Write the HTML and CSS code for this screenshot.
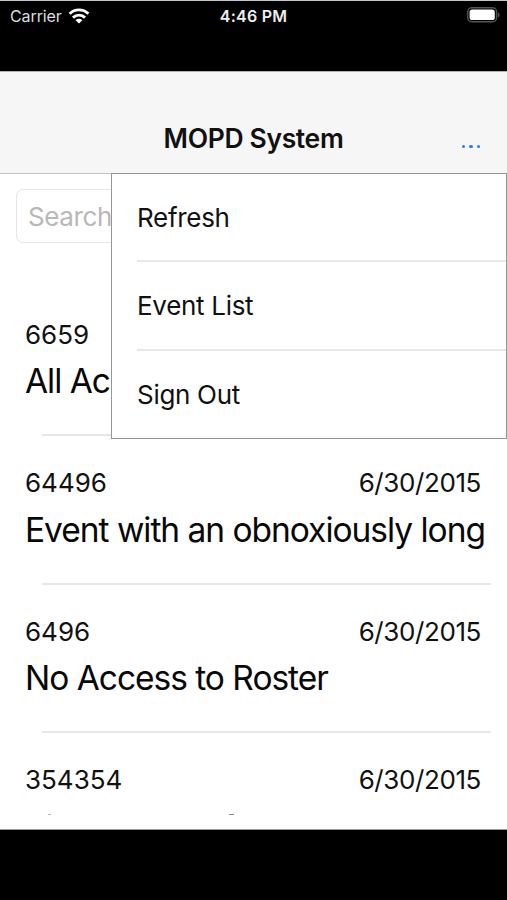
FILE: index.html
```html
<!DOCTYPE html>
<html lang="en">
<head>
<meta charset="utf-8">
<title>MOPD System</title>
<link rel="stylesheet" href="styles.css">
</head>
<body>
<div class="phone">
  <header class="status">
    <div class="carrier"><span class="carrier-name">Carrier</span>
      <svg class="wifi" viewBox="0 0 22 16"><g fill="none" stroke="#fff" stroke-width="2.9"><path d="M1.6 5.8a13.3 13.3 0 0 1 18.8 0"/><path d="M5 9.6a8.5 8.5 0 0 1 12 0"/></g><path d="M11 15.6 7.6 12.2a4.8 4.8 0 0 1 6.8 0z" fill="#fff"/></svg>
    </div>
    <span class="clock">4:46 PM</span>
    <svg class="battery" viewBox="0 0 33 16"><rect x=".8" y=".8" width="28.8" height="14" rx="4" fill="none" stroke="#555" stroke-width="1.4"/><rect x="2.6" y="2.5" width="25.2" height="10.6" rx="2.6" fill="#fff"/><path d="M31 5.5c2 .6 2 4.4 0 5z" fill="#555"/></svg>
  </header>
  <nav class="navbar">
    <h1 class="title">MOPD System</h1>
    <span class="more"><i></i><i></i><i></i></span>
    <ul class="menu">
      <li>Refresh</li>
      <li>Event List</li>
      <li>Sign Out</li>
    </ul>
  </nav>
  <main class="content">
    <div class="search">Search</div>
    <section class="list">
      <article class="event"><div class="meta"><span>6659</span></div><h2 class="covered">All Acc</h2></article>
      <article class="event"><div class="meta"><span>64496</span><span class="date">6/30/2015</span></div><h2>Event with an obnoxiously long</h2></article>
      <article class="event"><div class="meta"><span>6496</span><span class="date">6/30/2015</span></div><h2>No Access to Roster</h2></article>
      <article class="event"><div class="meta"><span>354354</span><span class="date">6/30/2015</span></div><div class="cut"><i class="dot"></i><i class="hook"></i></div></article>
    </section>
  </main>
  <footer class="bottom"></footer>
</div>
</body>
</html>
```
FILE: styles.css
```css
* { box-sizing: border-box; }
body { margin: 0; background: #000; font-family: Inter, "Liberation Sans", sans-serif; color: #111; }
h1, h2, ul { margin: 0; padding: 0; font-weight: 400; list-style: none; }
.phone { width: 507px; height: 900px; display: flex; flex-direction: column; overflow: hidden; white-space: nowrap; }
.status { height: 71px; flex: none; border-top: 1.5px solid #c9c9c9; background: #000; color: #eee; display: grid; grid-template-columns: 1fr auto 1fr; align-items: start; padding: 5px 7px 0 10px; font-size: 16px; line-height: 20px; }
.carrier { display: flex; gap: 6px; }
.carrier-name { color: #ddd; letter-spacing: -.1px; }
.wifi { width: 22px; height: 16px; margin-top: 2px; }
.clock { font-weight: 600; font-size: 16px; letter-spacing: .25px; margin-left: -3px; }
.battery { width: 33px; height: 16px; justify-self: end; margin-top: 1px; }
.navbar { position: relative; height: 103px; flex: none; background: #f6f6f6; border-top: 1px solid #b0b0b0; border-bottom: 1px solid #c4c4c4; display: grid; grid-template-columns: 1fr auto 1fr; padding: 50px 27px 0; line-height: 32px; }
.title { grid-column: 2; font-size: 26.5px; font-weight: 600; letter-spacing: -.35px; }
.more { justify-self: end; display: flex; gap: 4px; padding-top: 22.5px; }
.more i { width: 3.4px; height: 3.4px; border-radius: 50%; background: #2580e8; }
.menu { position: absolute; z-index: 2; top: 101px; left: 111px; width: 396px; height: 266px; background: #fff; border: 1px solid #969696; padding-left: 25px; font-size: 26px; letter-spacing: -.3px; }
.menu li { height: 88.4px; line-height: 88px; border-bottom: 2px solid #e8e8e8; }
.menu li:last-child { border: 0; }
.content { height: 656px; flex: none; background: #fff; overflow: hidden; border-bottom: 1px solid #999; }
.search { width: 474px; height: 54px; margin: 15px 0 0 16px; border: 1.5px solid #e4e4e4; border-radius: 7px; padding-left: 11px; color: #b8b8b8; font-size: 26px; line-height: 53px; letter-spacing: -.4px; }
.list { padding-top: 44.5px; }
.event { height: 148.5px; padding: 30.4px 22px 0 25px; background: linear-gradient(#e6e6e6, #e6e6e6) 42px 100% / 449px 2px no-repeat; }
.meta { display: flex; justify-content: space-between; font-size: 26px; line-height: 34px; padding-right: 4px; }
.date { letter-spacing: -.4px; }
.event h2 { margin-top: 8.6px; font-size: 33.5px; line-height: 42px; letter-spacing: -1.02px; color: #080808; }
.event .covered { position: relative; }
.cut { display: flex; padding: 16.6px 0 0 23px; }
.dot { width: 3px; height: 1px; background: #bbb; }
.hook { width: 5px; height: 1px; margin-left: 178px; background: #888; }
.bottom { flex: 1; background: #000; }
```
